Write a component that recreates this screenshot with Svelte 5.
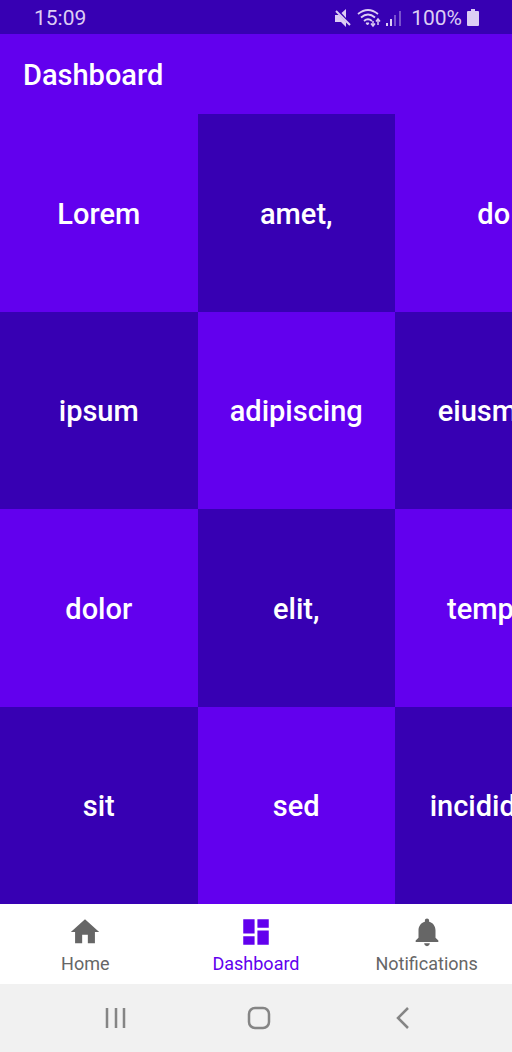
<script>
  const words = [
    'Lorem', 'ipsum', 'dolor', 'sit',
    'amet,', 'adipiscing', 'elit,', 'sed',
    'do', 'eiusmod', 'tempor', 'incididunt'
  ];

  const tabs = [
    { id: 'home', label: 'Home', path: 'M10 20v-6h4v6h5v-8h3L12 3 2 12h3v8z' },
    { id: 'dashboard', label: 'Dashboard', path: 'M3 13h8V3H3v10zm0 8h8v-6H3v6zm10 0h8V11h-8v10zm0-18v6h8V3h-8z' },
    {
      id: 'notifications',
      label: 'Notifications',
      path: 'M12 22c1.1 0 2-.9 2-2h-4c0 1.1.9 2 2 2zm6-6v-5c0-3.07-1.63-5.64-4.5-6.32V4c0-.83-.67-1.5-1.5-1.5s-1.5.67-1.5 1.5v.68C7.64 5.36 6 7.92 6 11v5l-2 2v1h16v-1l-2-2z'
    }
  ];

  let active = $state('dashboard');
  const isDark = (i) => (Math.floor(i / 4) + (i % 4)) % 2 === 1;
</script>

<div class="screen">
  <div class="status">
    <span>15:09</span>
    <div class="indicators">
      <svg width="18" height="20" viewBox="0 0 18 20" aria-hidden="true">
        <path d="M1 7h4l7 7v5l-5-5H1z" fill="currentColor" />
        <path d="M7.500 5L12 1v9z" fill="currentColor" />
        <path d="M2 3l14 14" stroke="currentColor" stroke-width="2" />
      </svg>
      <svg width="24" height="20" viewBox="0 0 24 20" fill="none" stroke="currentColor" stroke-width="1.800" aria-hidden="true">
        <path d="M1 6q10-8 20 0M4 9.500q7-6 14 0M7 13q4-3.500 8 0" />
        <path d="M9 15h3l-1.500 2z" fill="currentColor" stroke-width="1" />
        <path d="M16 13v5M21 17v-6" stroke-width="1.500" />
        <path d="M14 15.500l2 2.500 2-2.500M19 13.500l2-2.500 2 2.500" stroke-width="1.500" />
      </svg>
      <svg width="16" height="20" viewBox="0 0 16 20" fill="currentColor" aria-hidden="true">
        <path d="M0 15h2v3H0zM4 11h2v7H4z" />
        <path d="M8 7h2v11H8zM13 3h2v15h-2z" opacity=".4" />
      </svg>
      <span class="percent">100%</span>
      <svg width="12" height="20" viewBox="0 0 12 20" fill="currentColor" aria-hidden="true">
        <path d="M4 1h4v2h3q1 0 1 1v13q0 1-1 1H1q-1 0-1-1V4q0-1 1-1h3z" />
      </svg>
    </div>
  </div>

  <header><h1>Dashboard</h1></header>

  <main>
    <div class="board">
      {#each words as word, i}
        <div class="tile" class:dark={isDark(i)}>{word}</div>
      {/each}
    </div>
  </main>

  <nav class="tabs" aria-label="Main">
    {#each tabs as tab}
      <button class="tab" class:active={active === tab.id} onclick={() => (active = tab.id)}>
        <svg width="34" height="34" viewBox="0 0 24 24" fill="currentColor" aria-hidden="true">
          <path d={tab.path} />
        </svg>
        <span>{tab.label}</span>
      </button>
    {/each}
  </nav>

  <div class="system">
    <button aria-label="Recent apps">
      <svg width="24" height="24" viewBox="0 0 24 24"><path d="M4 2v20M13 2v20M21 2v20" /></svg>
    </button>
    <button aria-label="Home screen">
      <svg width="24" height="24" viewBox="0 0 24 24"><rect x="2" y="2" width="20" height="20" rx="6" /></svg>
    </button>
    <button aria-label="Back">
      <svg width="24" height="24" viewBox="0 0 24 24"><path d="M17 2L7 12l10 10" /></svg>
    </button>
  </div>
</div>

<style>
  .screen {
    display: flex;
    flex-direction: column;
    height: 100vh;
    overflow: hidden;
    font-family: Roboto, sans-serif;
    color: #fff;
    background: #3700b3;
  }
  .status {
    flex: none;
    display: flex;
    align-items: center;
    justify-content: space-between;
    height: 34px;
    padding: 2px 33px 0 34px;
    box-sizing: border-box;
    color: #dccdf4;
    font-size: 21px;
  }
  .indicators {
    display: flex;
    align-items: center;
    gap: 5px;
  }
  .indicators svg {
    display: block;
  }
  .percent {
    margin-left: 4px;
  }
  header {
    flex: none;
    display: flex;
    align-items: center;
    height: 80px;
    padding: 2px 23px 0;
    box-sizing: border-box;
    background: #6200ee;
  }
  h1 {
    margin: 0;
    font-size: 29px;
    font-weight: 500;
  }
  main {
    flex: 1;
    min-height: 0;
    overflow: hidden;
    container-type: size;
  }
  .board {
    display: grid;
    grid-auto-flow: column;
    grid-template-rows: repeat(4, 25cqh);
    grid-auto-columns: 25cqh;
  }
  .tile {
    display: flex;
    align-items: center;
    justify-content: center;
    padding-top: 2px;
    box-sizing: border-box;
    background: #6200ee;
    font-size: 29px;
    font-weight: 500;
  }
  .dark {
    background: #3700b3;
  }
  button {
    border: 0;
    padding: 0;
    background: none;
    font: inherit;
    color: inherit;
    cursor: pointer;
  }
  .tabs {
    flex: none;
    display: grid;
    grid-template-columns: repeat(3, 1fr);
    height: 80px;
    background: #fff;
    color: #666;
  }
  .tab {
    display: flex;
    flex-direction: column;
    align-items: center;
    justify-content: center;
    gap: 5px;
    font-size: 18px;
    line-height: 20px;
  }
  .tab svg {
    display: block;
  }
  .active {
    color: #6200ee;
  }
  .system {
    flex: none;
    display: flex;
    align-items: center;
    justify-content: center;
    gap: 120px;
    height: 68px;
    padding-left: 6px;
    background: #f1f1f1;
    color: #858585;
  }
  .system svg {
    display: block;
    fill: none;
    stroke: currentColor;
    stroke-width: 2.500;
  }
</style>
